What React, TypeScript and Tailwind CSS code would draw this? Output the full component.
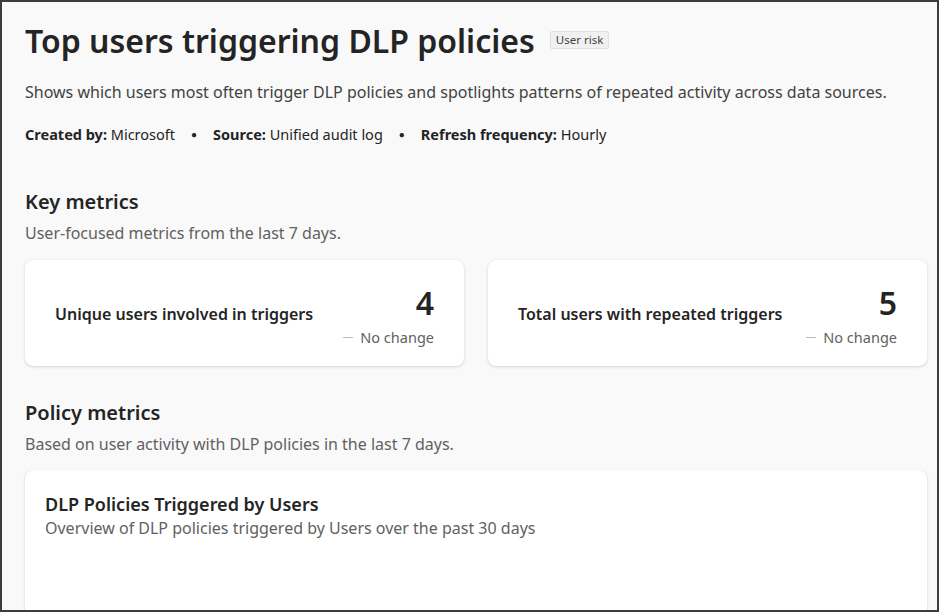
const font = { fontFamily: '"Noto Sans", "Open Sans", sans-serif' };

type Metric = { label: string; value: number };

const metrics: Metric[] = [
  { label: "Unique users involved in triggers", value: 4 },
  { label: "Total users with repeated triggers", value: 5 },
];

export default function App() {
  return (
    <div
      style={font}
      className="w-[939px] h-[612px] overflow-hidden border-2 border-[#3c3c3c] bg-[#f9f9f9] text-[#242424]"
    >
      <div className="pl-[23px] pr-[10px] pt-[20px]">
        <div className="flex items-start gap-[15px]">
          <h1 className="text-[32px] font-semibold leading-[38px]">
            Top users triggering DLP policies
          </h1>
          <span className="mt-[9px] rounded-[2px] border border-[#e0e0e0] bg-[#f0f0f0] px-[5px] text-[11.5px] leading-[16px] text-[#424242]">
            User risk
          </span>
        </div>
        <p className="mt-[22px] text-[16px] leading-[20px] text-[#424242]">
          Shows which users most often trigger DLP policies and spotlights patterns of repeated activity across data sources.
        </p>
        <MetaLine />

        <Section title="Key metrics" subtitle="User-focused metrics from the last 7 days." className="mt-[45px]" />
        <div className="mt-[16px] grid grid-cols-2 gap-[24px]">
          {metrics.map((m) => (
            <MetricCard key={m.label} metric={m} />
          ))}
        </div>

        <Section title="Policy metrics" subtitle="Based on user activity with DLP policies in the last 7 days." className="mt-[34px]" />
        <div className="mt-[15px] h-[200px] rounded-[8px] bg-white px-[20px] pt-[22px] shadow-[0_1px_3px_rgba(0,0,0,0.14),0_0_1px_rgba(0,0,0,0.1)]">
          <h3 className="text-[18px] font-semibold leading-[24px]">DLP Policies Triggered by Users</h3>
          <p className="mt-[2px] text-[16px] leading-[20px] text-[#616161]">
            Overview of DLP policies triggered by Users over the past 30 days
          </p>
        </div>
      </div>
    </div>
  );
}

function MetaLine() {
  return (
    <div className="mt-[22px] flex items-center gap-[16px] text-[14.5px] leading-[20px] text-[#242424]">
      <span>
        <span className="font-bold">Created by:</span> Microsoft
      </span>
      <span className="text-[10px]">●</span>
      <span>
        <span className="font-bold">Source:</span> Unified audit log
      </span>
      <span className="text-[10px]">●</span>
      <span>
        <span className="font-bold">Refresh frequency:</span> Hourly
      </span>
    </div>
  );
}

function Section({ title, subtitle, className }: { title: string; subtitle: string; className?: string }) {
  return (
    <div className={className}>
      <h2 className="text-[20px] font-semibold leading-[26px]">{title}</h2>
      <p className="mt-[7px] text-[16px] leading-[22px] text-[#616161]">{subtitle}</p>
    </div>
  );
}

function MetricCard({ metric }: { metric: Metric }) {
  return (
    <div className="flex h-[106px] items-center justify-between rounded-[8px] bg-white pl-[30px] pr-[30px] shadow-[0_1px_3px_rgba(0,0,0,0.14),0_0_1px_rgba(0,0,0,0.1)]">
      <span className="mt-[2px] text-[16px] font-semibold leading-[20px]">{metric.label}</span>
      <div className="flex flex-col items-end pt-[4px]">
        <span className="text-[32px] font-semibold leading-[38px]">{metric.value}</span>
        <span className="mt-[6px] flex items-center gap-[7px] text-[14.5px] leading-[18px] text-[#616161]">
          <span className="inline-block h-[1px] w-[10px] bg-[#bdbdbd]" />
          No change
        </span>
      </div>
    </div>
  );
}
